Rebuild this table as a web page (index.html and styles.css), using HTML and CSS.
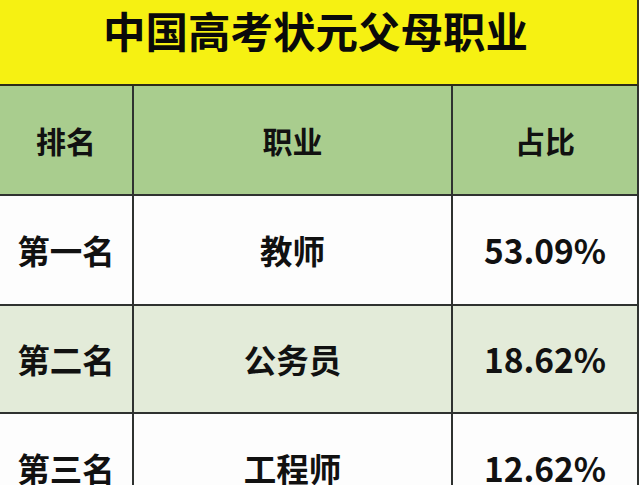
FILE: index.html
```html
<!DOCTYPE html>
<html lang="zh">
<head>
<meta charset="utf-8">
<link rel="stylesheet" href="styles.css">
</head>
<body>
<div class="sheet">
  <div class="title"><span>中国高考状元父母职业</span></div>
  <div class="grid">
    <div class="cell head">排名</div>
    <div class="cell head">职业</div>
    <div class="cell head">占比</div>

    <div class="cell rank">第一名</div>
    <div class="cell job">教师</div>
    <div class="cell pct">53.09%</div>

    <div class="cell rank alt">第二名</div>
    <div class="cell job alt">公务员</div>
    <div class="cell pct alt">18.62%</div>

    <div class="cell rank">第三名</div>
    <div class="cell job">工程师</div>
    <div class="cell pct">12.62%</div>
  </div>
</div>
</body>
</html>
```
FILE: styles.css
```css
* { box-sizing: border-box; }
html, body {
  margin: 0;
  padding: 0;
  background: #ffffff;
  overflow: hidden;
}
body {
  width: 640px;
  height: 485px;
  font-family: "Noto Sans CJK SC", "Noto Sans", sans-serif;
  color: #111;
}
.sheet {
  width: 639px;
  display: flex;
  flex-direction: column;
}
.title {
  height: 86px;
  background: #f6f112;
  border-bottom: 2px solid #2c2c1a;
  border-right: 2px solid #3a3a20;
  display: flex;
  align-items: center;
  padding-left: 103px;
  padding-bottom: 24px;
}
.title span {
  font-size: 42.5px;
  font-weight: 700;
  letter-spacing: 0;
  line-height: 1;
  color: #0a0a0a;
}
.grid {
  display: grid;
  grid-template-columns: 132px 317px 184px;
  grid-template-rows: 108px 108px 106px 108px;
  gap: 2px;
  background: #2f3230;
  padding-right: 2px;
  width: 639px;
}
.cell {
  display: flex;
  align-items: center;
  justify-content: center;
  font-weight: 700;
  background: #fdfdfd;
  line-height: 1;
}
.head {
  background: #a9cd8e;
  font-size: 30px;
}
.rank, .job {
  font-size: 32.5px;
}
.pct {
  font-size: 33.5px;
  font-weight: 600;
}
.alt {
  background: #e3ebd9;
}
```
